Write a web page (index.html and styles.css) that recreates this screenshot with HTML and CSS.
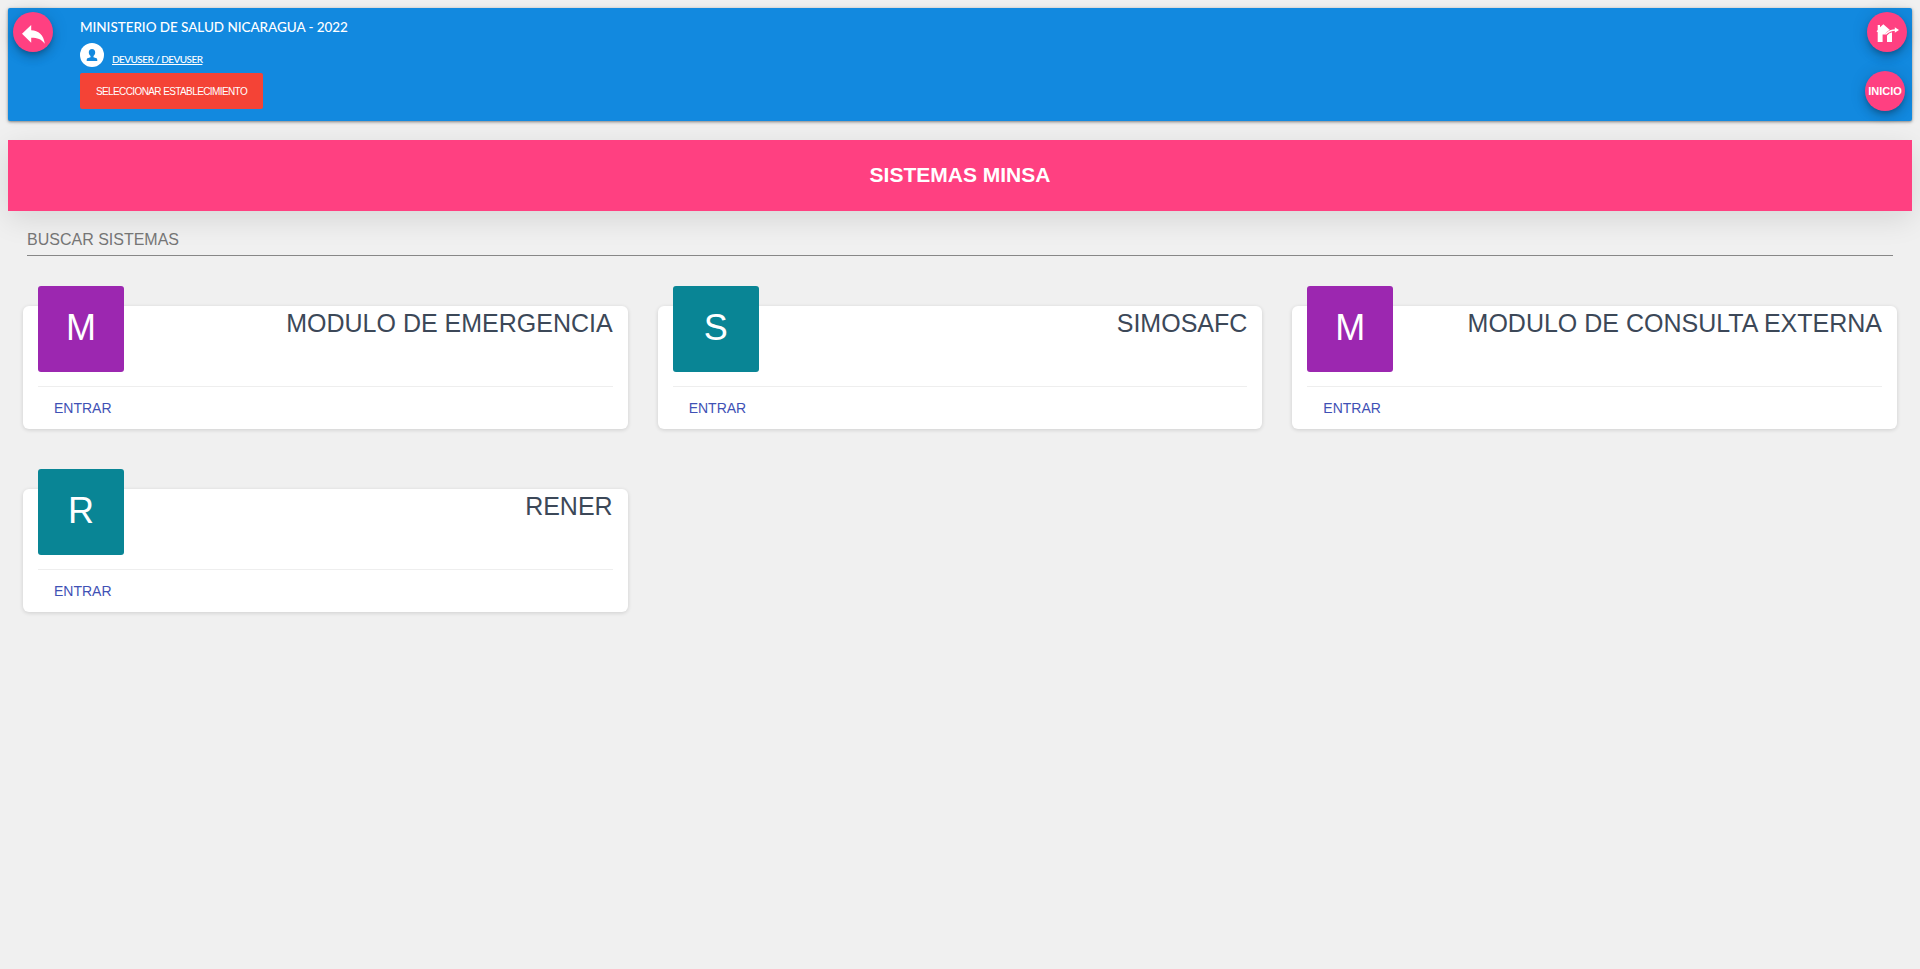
FILE: index.html
```html
<!DOCTYPE html>
<html lang="es">
<head>
<meta charset="utf-8">
<title>Sistemas MINSA</title>
<link rel="stylesheet" href="styles.css">
</head>
<body>
<header class="topbar">
  <button class="fab" aria-label="Regresar">
    <svg class="icon-back" viewBox="0 0 24 20"><path d="M9.2 1V6.2C16.5 6.5 21.500 10.500 22.800 19.800C19.500 15.300 15.500 13.800 9.200 13.800V18.700L0 9.800Z" fill="#fff"/></svg>
  </button>
  <div class="info">
    <div class="ministry">MINISTERIO DE SALUD NICARAGUA - 2022</div>
    <div class="user">
      <svg class="avatar" viewBox="0 0 24 24"><circle cx="12" cy="12" r="12" fill="#fff"/><path d="M12 6c2 0 3.200 1.300 3.200 3.200 0 1.700-.8 3-1.700 3.800v1.200l3 1c.6.300.8 1 .8 2.800H6.700c0-1.800.2-2.500.8-2.800l3-1V13c-.9-.8-1.700-2.100-1.700-3.800C8.800 7.300 10 6 12 6Z" fill="#1289df"/></svg>
      <a class="user-name">DEVUSER / DEVUSER</a>
    </div>
    <button class="select">SELECCIONAR ESTABLECIMIENTO</button>
  </div>
  <div class="actions">
    <button class="fab fab-home" aria-label="Salir">
      <svg class="icon-home" viewBox="0 0 24 20"><path d="M2.700 2H5V4.300L8.300 1.200 15.500 7.500 11.200 11.500H7.600V19H2.700V9.200L1.500 8.300 2.700 7Z" fill="#fff"/><path d="M12 11.500 14.500 9.800 17 9.200V19H12Z" fill="#fff"/><path d="M11 11.800C13.500 8.500 16 7.200 20.500 7.200" fill="none" stroke="#ff4081" stroke-width="2.700"/><path d="M10.500 11.300C13.500 8.500 16 7.100 20.500 7.100" fill="none" stroke="#fff" stroke-width="1.500"/><path d="M19.800 4.300 24 7.100 19.800 9.800Z" fill="#fff"/></svg>
    </button>
    <button class="fab">INICIO</button>
  </div>
</header>
<h1 class="banner">SISTEMAS MINSA</h1>
<input class="search" placeholder="BUSCAR SISTEMAS">
<main class="grid">
  <article class="card"><div class="card-head"><div class="tile purple">M</div><h2 class="name">MODULO DE EMERGENCIA</h2></div><div class="card-foot"><a class="enter">ENTRAR</a></div></article>
  <article class="card"><div class="card-head"><div class="tile teal">S</div><h2 class="name">SIMOSAFC</h2></div><div class="card-foot"><a class="enter">ENTRAR</a></div></article>
  <article class="card"><div class="card-head"><div class="tile purple">M</div><h2 class="name">MODULO DE CONSULTA EXTERNA</h2></div><div class="card-foot"><a class="enter">ENTRAR</a></div></article>
  <article class="card"><div class="card-head"><div class="tile teal">R</div><h2 class="name">RENER</h2></div><div class="card-foot"><a class="enter">ENTRAR</a></div></article>
</main>
</body>
</html>
```
FILE: styles.css
```css
* { box-sizing: border-box; }
body {
  margin: 0;
  padding: 8px;
  background: #f0f0f0;
  font-family: "Liberation Sans", Arial, sans-serif;
}
button { font-family: inherit; border: 0; padding: 0; }
.topbar {
  display: flex;
  height: 113px;
  padding: 4px 5px;
  background: #1289df;
  border-radius: 2px;
  box-shadow: 0 1px 3px rgba(0,0,0,.45), 0 0 10px rgba(0,0,0,.06);
}
.fab {
  display: flex;
  align-items: center;
  justify-content: center;
  flex: none;
  width: 40px;
  height: 40px;
  border-radius: 50%;
  background: #ff4081;
  color: #fff;
  font-size: 11px;
  font-weight: bold;
  box-shadow: 0 3px 5px -1px rgba(0,0,0,.2), 0 6px 10px rgba(0,0,0,.14), 0 1px 18px rgba(0,0,0,.12);
}
.icon-back { width: 24px; height: 20px; margin: 3px 0 0 1px; }
.icon-home { width: 24px; height: 20px; margin-top: 2px; }
.info { margin-left: 27px; padding-top: 5px; color: #fff; font-family: Lato, sans-serif; }
.ministry { height: 26px; line-height: 20px; font-size: 13.5px; font-weight: 500; letter-spacing: -.05px; white-space: nowrap; }
.user { display: flex; height: 30px; gap: 8px; }
.avatar { width: 24px; height: 24px; }
.user-name { padding-top: 9px; font-size: 10px; font-weight: 500; line-height: 14px; letter-spacing: -.55px; text-decoration: underline; }
.select {
  display: block;
  width: 183px;
  height: 36px;
  padding-top: 1px;
  border-radius: 2px;
  background: #f44336;
  color: #fff;
  font-family: "Liberation Sans", Arial, sans-serif;
  font-size: 10px;
  letter-spacing: -.6px;
  white-space: nowrap;
}
.actions { display: flex; flex-direction: column; gap: 19px; margin-left: auto; width: 42px; }
.fab-home { margin-left: 2px; }
.banner {
  display: flex;
  align-items: center;
  justify-content: center;
  height: 71px;
  margin: 19px 0 0;
  padding-bottom: 2px;
  background: #ff4081;
  color: #fff;
  font-size: 21px;
  box-shadow: 0 8px 30px rgba(0,0,0,.11);
}
.search {
  display: block;
  width: calc(100% - 38px);
  height: 33px;
  margin: 12px 19px 0;
  padding: 2px 0 0;
  border: 0;
  border-bottom: 1px solid #878787;
  outline: 0;
  border-radius: 0;
  background: transparent;
  font: 16px "Liberation Sans", Arial, sans-serif;
}
.search::placeholder { color: #757575; opacity: 1; }
.grid {
  display: grid;
  grid-template-columns: repeat(3, 1fr);
  gap: 60px 30px;
  padding: 50px 15px 0;
}
.card {
  height: 123px;
  padding: 0 15px;
  border-radius: 6px;
  background: #fff;
  box-shadow: 0 1px 4px rgba(0,0,0,.14);
}
.card-head { display: flex; justify-content: space-between; height: 80px; }
.tile {
  width: 86px;
  height: 86px;
  margin-top: -20px;
  border-radius: 3px;
  color: #fff;
  font-size: 36px;
  line-height: 83px;
  text-align: center;
}
.purple { background: #9c27b0; }
.teal { background: #098595; }
.name { margin: 3px 0 0; color: #3c4858; font-size: 25px; font-weight: 400; line-height: 28px; }
.card-foot { height: 43px; padding: 13px 16px; border-top: 1px solid #eee; }
.enter { color: #3f51b5; font-size: 14px; line-height: 16px; display: block; }
```
